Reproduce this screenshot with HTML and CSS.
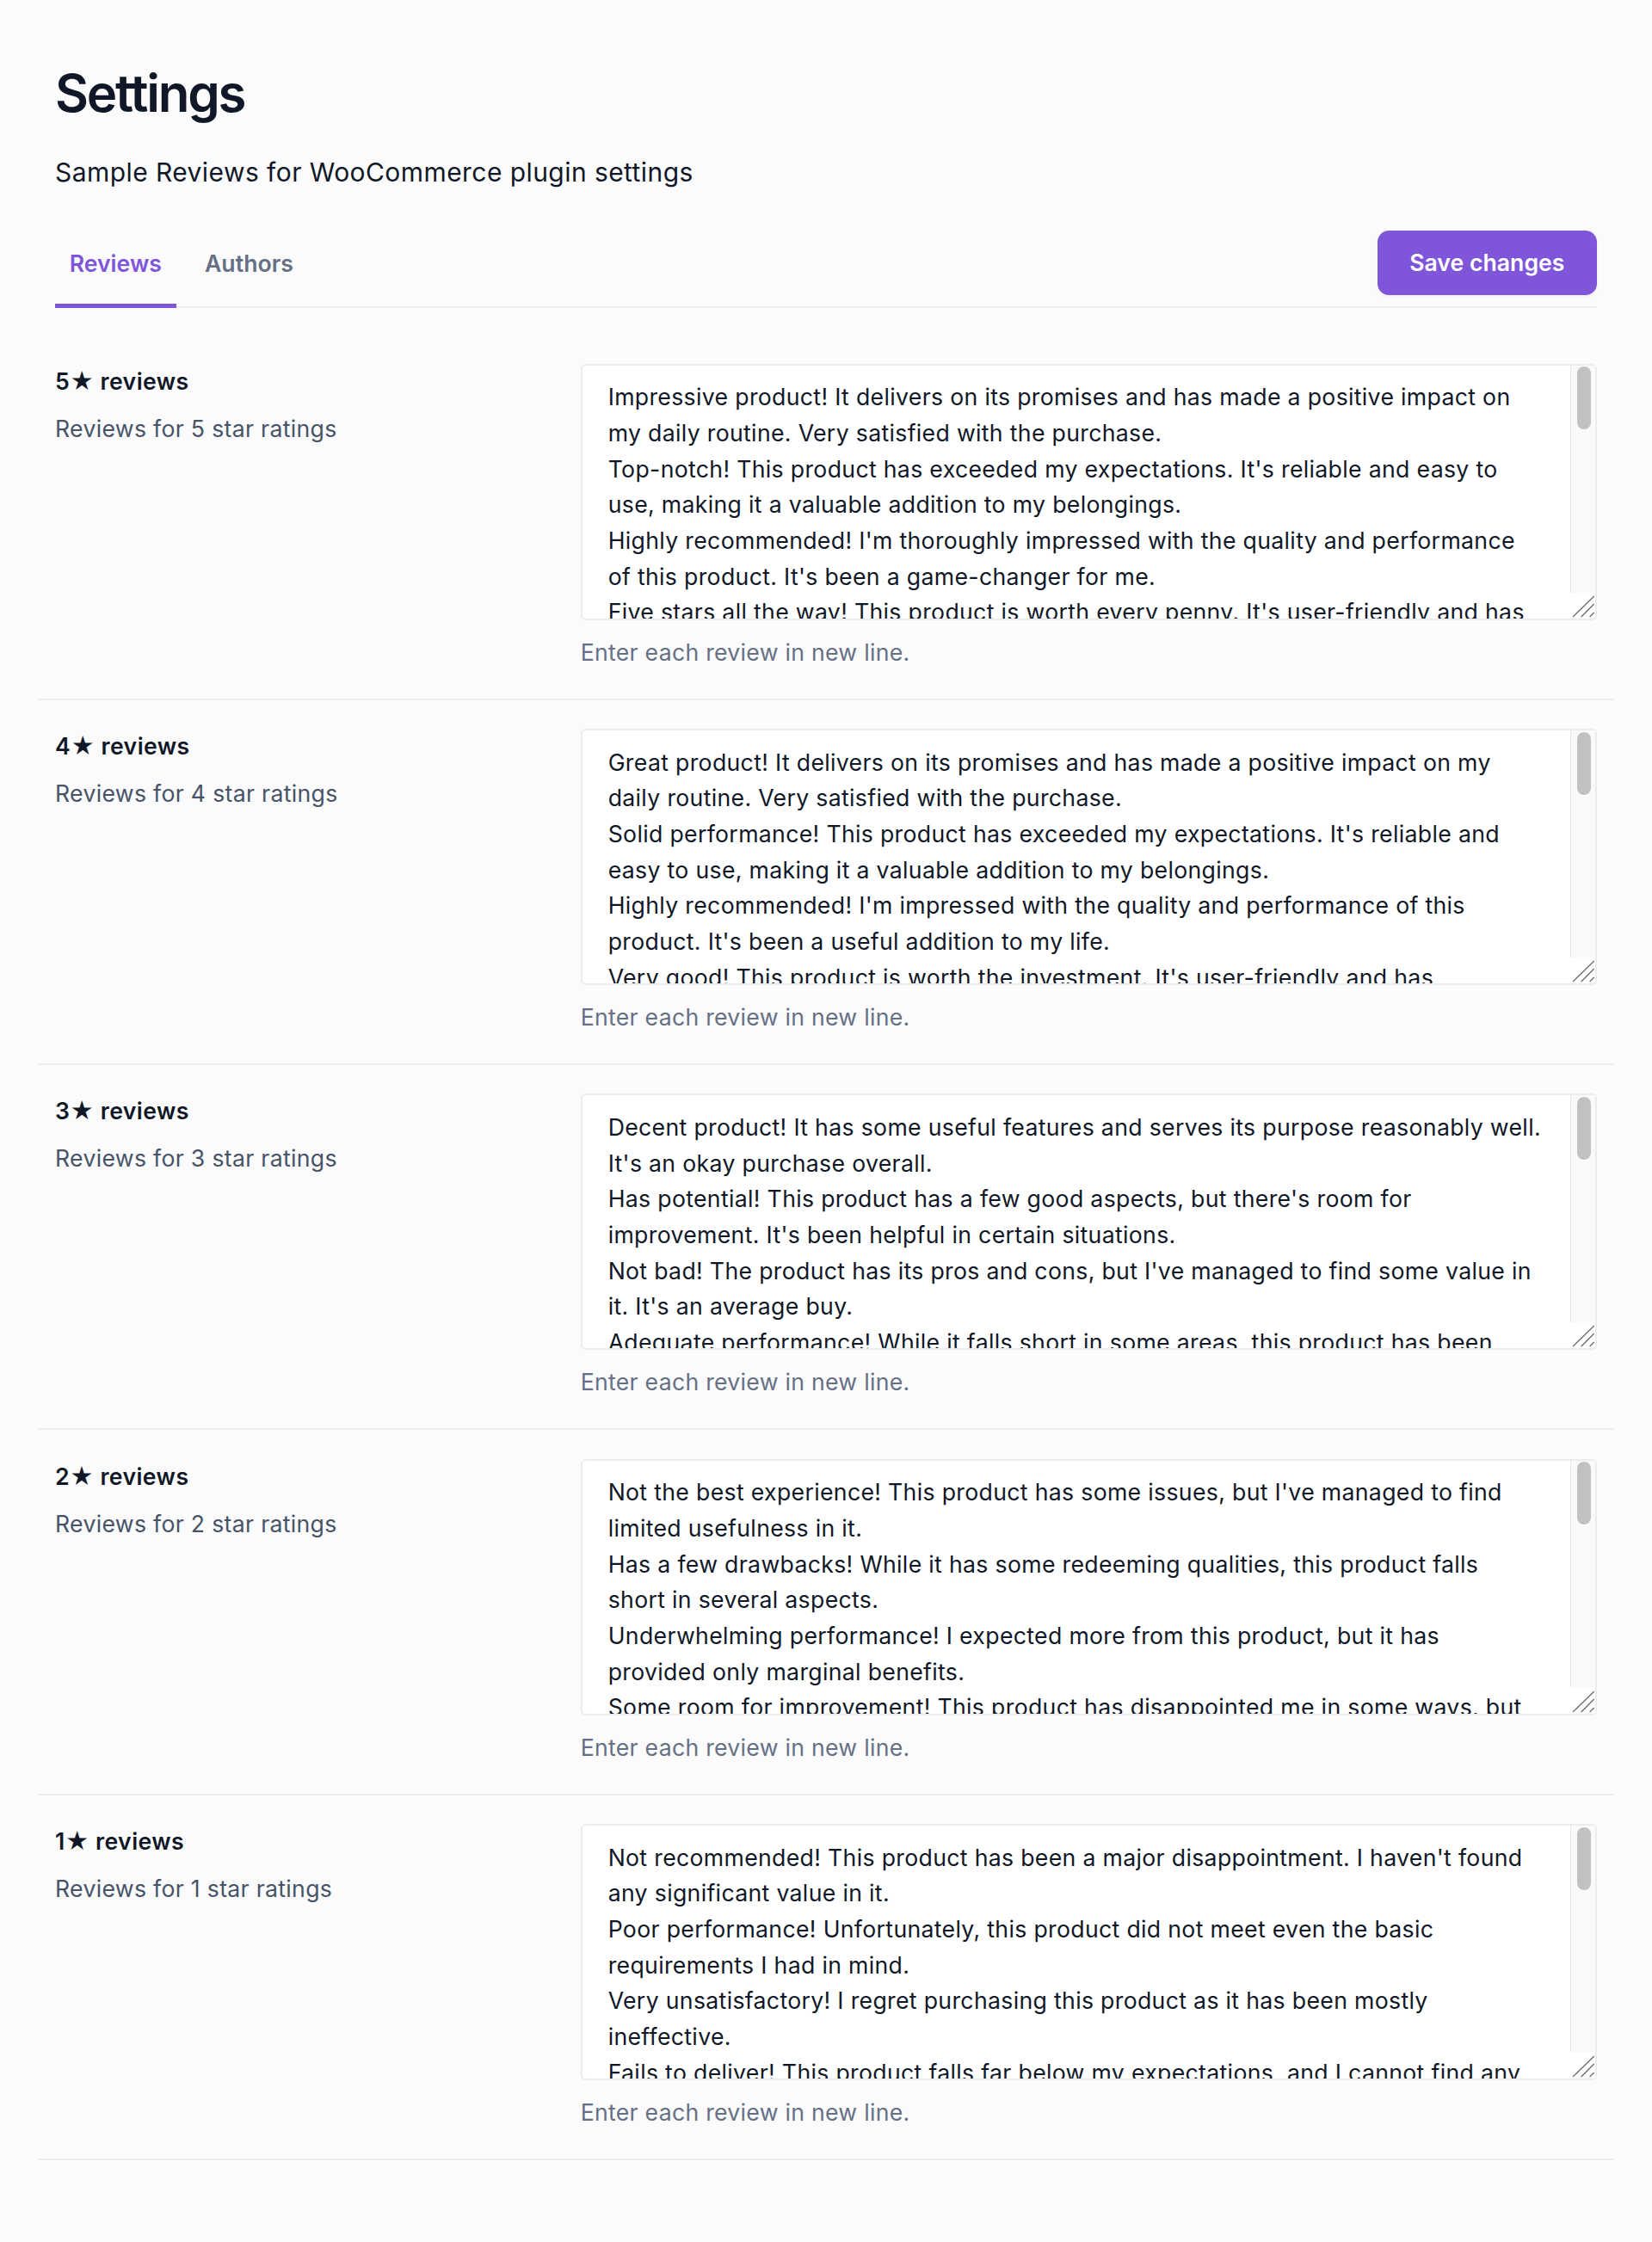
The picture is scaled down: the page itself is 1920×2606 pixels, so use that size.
FILE: index.html
```html
<!DOCTYPE html>
<html lang="en">
<head>
<meta charset="utf-8">
<title>Settings</title>
<link rel="stylesheet" href="styles.css">
</head>
<body>
<main class="page">
  <h1 class="title">Settings</h1>
  <p class="subtitle">Sample Reviews for WooCommerce plugin settings</p>

  <div class="tabbar">
    <nav class="tabs">
      <a class="tab active">Reviews</a>
      <a class="tab">Authors</a>
    </nav>
    <div class="actions">
      <button class="btn-primary" type="button">Save changes</button>
    </div>
  </div>

  <div class="list">
    <section class="row">
      <div class="info">
        <div class="label">5★ reviews</div>
        <div class="desc">Reviews for 5 star ratings</div>
      </div>
      <div class="field">
        <div class="ta-wrap">
          <textarea class="reviews">Impressive product! It delivers on its promises and has made a positive impact on my daily routine. Very satisfied with the purchase.
Top-notch! This product has exceeded my expectations. It's reliable and easy to use, making it a valuable addition to my belongings.
Highly recommended! I'm thoroughly impressed with the quality and performance of this product. It's been a game-changer for me.
Five stars all the way! This product is worth every penny. It's user-friendly and has simplified my everyday tasks.
Exceptional quality! This product has surpassed all my expectations and I would definitely buy it again.
Absolutely love it! The design is beautiful and it works perfectly. I use it every single day without any issues.
Outstanding value! This product is well-made, durable and performs exactly as described by the seller.
Fantastic purchase! It arrived quickly, was easy to set up and has worked flawlessly ever since.
Best purchase this year! The quality is excellent and it has made a real difference for me.
Perfect in every way! I'm extremely happy with this product and would recommend it to anyone.
Superb product! It is reliable, well-designed and a joy to use. Worth every cent I paid for it.
Couldn't be happier! This product does exactly what it promises and does it really well.</textarea>
          <div class="ta-scroll" aria-hidden="true"><span class="ta-thumb"></span></div>
          <div class="ta-corner" aria-hidden="true"><svg width="29" height="30" viewBox="0 0 29 30"><path d="M3 28L27.7 4M12.7 28L27.7 13M22.7 28L27.7 23" stroke="#6f6f6f" stroke-width="1.4" fill="none"/></svg></div>
        </div>
        <p class="help">Enter each review in new line.</p>
      </div>
    </section>

    <section class="row">
      <div class="info">
        <div class="label">4★ reviews</div>
        <div class="desc">Reviews for 4 star ratings</div>
      </div>
      <div class="field">
        <div class="ta-wrap">
          <textarea class="reviews">Great product! It delivers on its promises and has made a positive impact on my daily routine. Very satisfied with the purchase.
Solid performance! This product has exceeded my expectations. It's reliable and easy to use, making it a valuable addition to my belongings.
Highly recommended! I'm impressed with the quality and performance of this product. It's been a useful addition to my life.
Very good! This product is worth the investment. It's user-friendly and has simplified some of my daily tasks.
Pleasantly surprised! The product works well and the build quality is better than I expected for the price.
Good value for money! It does what it says, with only a few minor things that could be improved.
Happy with my purchase! It is easy to use and reliable, although the instructions could be clearer.
Works as expected! A dependable product that I use regularly. Shipping was fast and packaging was good.
Nice quality! The materials feel sturdy and it performs well. Just a couple of small improvements needed.
Would buy again! Overall a great experience, with only minor drawbacks that don't affect daily use.
Really useful! It has made a few of my routines easier, and it looks good too. Almost perfect.
Recommended! A well-made product that delivers consistent results. Not flawless, but very close.</textarea>
          <div class="ta-scroll" aria-hidden="true"><span class="ta-thumb"></span></div>
          <div class="ta-corner" aria-hidden="true"><svg width="29" height="30" viewBox="0 0 29 30"><path d="M3 28L27.7 4M12.7 28L27.7 13M22.7 28L27.7 23" stroke="#6f6f6f" stroke-width="1.4" fill="none"/></svg></div>
        </div>
        <p class="help">Enter each review in new line.</p>
      </div>
    </section>

    <section class="row">
      <div class="info">
        <div class="label">3★ reviews</div>
        <div class="desc">Reviews for 3 star ratings</div>
      </div>
      <div class="field">
        <div class="ta-wrap">
          <textarea class="reviews">Decent product! It has some useful features and serves its purpose reasonably well. It's an okay purchase overall.
Has potential! This product has a few good aspects, but there's room for improvement. It's been helpful in certain situations.
Not bad! The product has its pros and cons, but I've managed to find some value in it. It's an average buy.
Adequate performance! While it falls short in some areas, this product has been useful for basic everyday needs.
It's okay! The product works, but it doesn't really stand out compared to other options on the market.
Mixed feelings! Some features are great while others are disappointing. It gets the job done most of the time.
Average quality! It does what it needs to, but I expected a little more durability for the price.
Fair enough! The product is functional, though the setup was more complicated than it needed to be.
Satisfactory! Nothing special, but nothing terrible either. It meets my basic expectations.
Middle of the road! It works reasonably well, but there are a few annoying quirks to get used to.
Acceptable! It serves its purpose, although I think there are better alternatives available.
So-so experience! The product is fine for occasional use, but I wouldn't rely on it every day.</textarea>
          <div class="ta-scroll" aria-hidden="true"><span class="ta-thumb"></span></div>
          <div class="ta-corner" aria-hidden="true"><svg width="29" height="30" viewBox="0 0 29 30"><path d="M3 28L27.7 4M12.7 28L27.7 13M22.7 28L27.7 23" stroke="#6f6f6f" stroke-width="1.4" fill="none"/></svg></div>
        </div>
        <p class="help">Enter each review in new line.</p>
      </div>
    </section>

    <section class="row">
      <div class="info">
        <div class="label">2★ reviews</div>
        <div class="desc">Reviews for 2 star ratings</div>
      </div>
      <div class="field">
        <div class="ta-wrap">
          <textarea class="reviews">Not the best experience! This product has some issues, but I've managed to find limited usefulness in it.
Has a few drawbacks! While it has some redeeming qualities, this product falls short in several aspects.
Underwhelming performance! I expected more from this product, but it has provided only marginal benefits.
Some room for improvement! This product has disappointed me in some ways, but it still has a few uses.
Below expectations! The product works occasionally, but it is not as reliable as I had hoped it would be.
Disappointing quality! Some parts feel cheap and the performance is inconsistent from day to day.
Not worth the price! It does the basics, but there are many better options available for less money.
Frustrating at times! The product has potential, but frequent problems make it hard to recommend.
Could be much better! I've had several issues with it and customer support was not very helpful.
Lacking in features! It works, but it is missing many of the things that were advertised.
Mediocre at best! I use it only when I have no other choice. It needs a lot of improvement.
Barely functional! It does work, but the overall experience has been quite disappointing.</textarea>
          <div class="ta-scroll" aria-hidden="true"><span class="ta-thumb"></span></div>
          <div class="ta-corner" aria-hidden="true"><svg width="29" height="30" viewBox="0 0 29 30"><path d="M3 28L27.7 4M12.7 28L27.7 13M22.7 28L27.7 23" stroke="#6f6f6f" stroke-width="1.4" fill="none"/></svg></div>
        </div>
        <p class="help">Enter each review in new line.</p>
      </div>
    </section>

    <section class="row">
      <div class="info">
        <div class="label">1★ reviews</div>
        <div class="desc">Reviews for 1 star ratings</div>
      </div>
      <div class="field">
        <div class="ta-wrap">
          <textarea class="reviews">Not recommended! This product has been a major disappointment. I haven't found any significant value in it.
Poor performance! Unfortunately, this product did not meet even the basic requirements I had in mind.
Very unsatisfactory! I regret purchasing this product as it has been mostly ineffective.
Fails to deliver! This product falls far below my expectations, and I cannot find any reason to recommend it to others.
Complete waste of money! It stopped working after just a few days and I could not get a replacement.
Terrible quality! The product feels flimsy and broke the first time I tried to use it properly.
Do not buy! Nothing about this product works as described and the instructions are useless.
Extremely disappointed! It arrived damaged and the replacement had exactly the same problems.
Worst purchase ever! It did not perform any of the functions it promised to deliver.
Useless product! I tried everything to make it work, but it simply does not do its job.
Awful experience! Poor build, poor performance and no help from customer support at all.
Total letdown! I would give it zero stars if I could. Save your money and look elsewhere.</textarea>
          <div class="ta-scroll" aria-hidden="true"><span class="ta-thumb"></span></div>
          <div class="ta-corner" aria-hidden="true"><svg width="29" height="30" viewBox="0 0 29 30"><path d="M3 28L27.7 4M12.7 28L27.7 13M22.7 28L27.7 23" stroke="#6f6f6f" stroke-width="1.4" fill="none"/></svg></div>
        </div>
        <p class="help">Enter each review in new line.</p>
      </div>
    </section>
  </div>
</main>
</body>
</html>
```

FILE: styles.css
```css
* {
  box-sizing: border-box;
}

html,
body {
  margin: 0;
  background: #fbfbfc;
}

body {
  font-family: Inter, "Noto Sans", "DejaVu Sans", sans-serif;
  color: #101828;
}

.page {
  padding: 75px 64px 96px;
}

.title {
  margin: 0;
  font-size: 60px;
  line-height: 66.67px;
  font-weight: 600;
  letter-spacing: -2.2px;
}

.subtitle {
  margin: 38.5px 0 0;
  font-size: 30px;
  line-height: 41.67px;
  font-weight: 400;
  letter-spacing: 0.43px;
}

.tabbar {
  margin-top: 46.3px;
  display: flex;
  justify-content: space-between;
  align-items: flex-end;
  border-bottom: 2px solid #eaecf0;
}

.tabs {
  display: flex;
  gap: 16.67px;
  margin-bottom: -2px;
}

.tab {
  display: block;
  padding: 0 16.67px 25px;
  font-size: 26.67px;
  line-height: 41.67px;
  font-weight: 600;
  color: #667085;
  border-bottom: 5px solid transparent;
  cursor: pointer;
}

.tab.active {
  color: #7f56d9;
  border-bottom-color: #7f56d9;
}

.actions {
  margin-bottom: 13px;
}

.btn-primary {
  display: block;
  border: none;
  border-radius: 13.33px;
  background: #7f56d9;
  color: #ffffff;
  font-family: inherit;
  font-size: 26.67px;
  line-height: 41.67px;
  font-weight: 600;
  padding: 16.67px 37.5px;
  box-shadow: 0 1.67px 3.33px rgba(16, 24, 40, 0.05);
  cursor: pointer;
}

.list {
  margin-top: 31.3px;
}

.row {
  display: grid;
  grid-template-columns: repeat(3, 1fr);
  column-gap: 40px;
  margin: 0 -20px;
  padding: 33.33px 20px;
  border-bottom: 2px solid #eaecf0;
}

.label {
  font-size: 26.67px;
  line-height: 41.67px;
  font-weight: 600;
  color: #101828;
  letter-spacing: 0.4px;
}

.desc {
  margin-top: 13.33px;
  font-size: 26.67px;
  line-height: 41.67px;
  color: #475467;
  letter-spacing: 0.3px;
}

.field {
  grid-column: span 2;
}

.ta-wrap {
  position: relative;
}

.reviews {
  display: block;
  width: 100%;
  height: 298px;
  margin: 0;
  padding: 16.67px 62px 16.67px 30px;
  border: 2px solid #eaecf0;
  border-radius: 6px;
  background: #ffffff;
  color: #101828;
  font-family: inherit;
  font-size: 26.67px;
  line-height: 41.67px;
  letter-spacing: 0.32px;
  resize: none;
  outline: none;
  scrollbar-width: none;
}

.ta-scroll {
  position: absolute;
  top: 2px;
  right: 2px;
  bottom: 32px;
  width: 29px;
  background: #fafafa;
  border-left: 1px solid #e8e8e8;
}

.ta-thumb {
  position: absolute;
  top: 1.5px;
  left: 7px;
  width: 16px;
  height: 73px;
  border-radius: 8px;
  background: #c1c1c1;
}

.ta-corner {
  position: absolute;
  right: 2px;
  bottom: 2px;
  width: 29px;
  height: 30px;
  background: #ffffff;
  border-bottom-right-radius: 4px;
}

.ta-corner svg {
  display: block;
}

.help {
  margin: 17px 0 0;
  font-size: 26.67px;
  line-height: 40.67px;
  color: #667085;
  letter-spacing: 0.27px;
}
```
